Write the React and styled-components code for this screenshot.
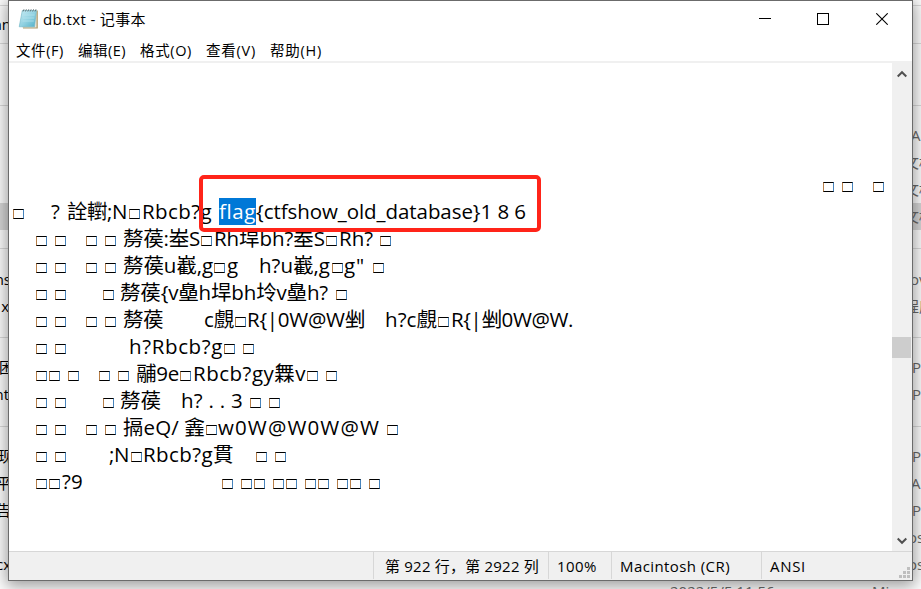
import React, { useLayoutEffect, useRef, useState } from "react";
import styled, { createGlobalStyle, css } from "styled-components";

const Global = createGlobalStyle`
  * { box-sizing: border-box; }
  html, body { margin: 0; overflow: hidden; background: #fff; }
`;

const FONT = '"Open Sans", "Noto Sans CJK SC", sans-serif';

/* ---------- text set to an exact measure ---------- */

const FitBox = styled.span`
  flex: none;
  width: ${(p) => p.$w}px;
  margin-left: ${(p) => p.$gap || 0}px;
  white-space: pre;
  ${(p) =>
    p.$selected &&
    css`
      color: #fff;
      background: #0078d7;
    `}
`;

function Fit({ w, gap, selected, children }) {
  const ref = useRef(null);
  const [spacing, setSpacing] = useState(0);
  useLayoutEffect(() => {
    const natural = ref.current.getBoundingClientRect().width;
    setSpacing((w - natural) / [...children].length);
  }, [w, children]);
  return (
    <FitBox $w={w} $gap={gap} $selected={selected}>
      <span ref={ref} style={{ letterSpacing: `${spacing}px` }}>
        {children}
      </span>
    </FitBox>
  );
}

/* ---------- file list behind the window ---------- */

const Desktop = styled.div`
  position: relative;
  width: 921px;
  height: 589px;
  overflow: hidden;
  background: #fff;
  font-family: ${FONT};
  color: #000;
`;

const FileRow = styled.div`
  display: flex;
  align-items: center;
  justify-content: space-between;
  height: ${(p) => p.$h}px;
  padding-bottom: 2px;
  background: ${(p) => (p.$hot ? "#d9d9d9" : "transparent")};
  border-bottom: ${(p) => (p.$line ? "1px solid #dcdcdc" : "0")};
  font-size: 15px;
  line-height: 20px;
  white-space: pre;
`;

const NameCell = styled.span`
  display: flex;
  justify-content: flex-end;
  width: ${(p) => p.$w || 9}px;
`;

const TypeCell = styled.span`
  width: ${(p) => p.$w}px;
  color: #6a6a6a;
`;

const DateCell = styled.span`
  flex: 1;
  padding-left: 661px;
  color: #6a6a6a;
`;

const FILE_ROWS = [
  { h: 6, line: true },
  { h: 38, line: true, name: "an", nameWidth: 11 },
  { h: 62, line: true },
  { h: 16 },
  { h: 27, type: "A", w: 10 },
  { h: 27, type: "文档", w: 17 },
  { h: 27, type: "文档", w: 17 },
  { h: 27, type: "文档", w: 17, hot: true },
  { h: 19, line: true },
  { h: 17 },
  { h: 27, name: "ns", nameWidth: 11, type: "ov", w: 11 },
  { h: 27, name: "x", type: "程序", w: 17 },
  { h: 18, line: true },
  { h: 16 },
  { h: 27, name: "困", nameWidth: 14, type: "P", w: 9 },
  { h: 27, name: "nt", type: "P", w: 9 },
  { h: 19, line: true },
  { h: 16 },
  { h: 27, name: "现", nameWidth: 13, type: "P", w: 9 },
  { h: 27, name: "平", nameWidth: 11, type: "A", w: 10 },
  { h: 27, name: "告", nameWidth: 11, type: "P", w: 9 },
  { h: 27, type: "os", w: 13 },
  { h: 27, name: "cx", nameWidth: 11, type: "os", w: 13 },
  { h: 27, date: "2022/5/5 11:56", type: "Micr", w: 49 },
];

/* ---------- Notepad window ---------- */

const Window = styled.main`
  position: absolute;
  left: 8px;
  top: 0;
  width: 905px;
  height: 581px;
  display: flex;
  flex-direction: column;
  border: 1px solid #6b6b6b;
  background: #fff;
  box-shadow: 0 3px 15px 2px rgba(0, 0, 0, 0.4);
`;

const TitleBar = styled.header`
  display: flex;
  align-items: center;
  height: 36px;
  padding-left: 9px;
  font-size: 15px;
  line-height: 20px;

  > svg {
    flex: none;
  }
`;

const Caption = styled.div`
  display: flex;
  flex: 1;
`;

const Controls = styled.div`
  display: flex;
  align-items: center;
  gap: 46px;
  padding-right: 24px;
`;

const CloseMark = styled.svg`
  margin-left: 1px;
`;

const MenuBar = styled.nav`
  display: flex;
  height: 26px;
  padding-left: 7px;
  border-bottom: 2px solid #f0f0f0;
  font-size: 14.5px;
  line-height: 28px;
`;

const Editor = styled.section`
  display: flex;
  height: 488px;
`;

const Page = styled.div`
  flex: 1;
  padding-top: 107px;
  overflow: hidden;
`;

const Line = styled.div`
  display: flex;
  align-items: baseline;
  height: 27px;
  font-size: 20.5px;
  line-height: 27px;

  &::before {
    content: "\\200b";
    width: 0;
    font-family: "Noto Sans CJK SC", sans-serif;
  }
`;

const Missing = styled.span`
  flex: none;
  width: 11px;
  height: 10px;
  margin-left: ${(p) => p.$gap}px;
  border: 1px solid #000;
  border-left-color: #b87f48;
  border-right-color: #4784bd;
`;

const ScrollTrack = styled.div`
  display: flex;
  flex-direction: column;
  align-items: center;
  width: 20px;
  padding: 7px 1px 6px 0;
  background: #f0f0f0;
`;

const Thumb = styled.div`
  width: 19px;
  height: 21px;
  margin: 259px 0 auto;
  background: #cdcdcd;
`;

const StatusBar = styled.footer`
  display: flex;
  height: 29px;
  border-top: 1px solid #d7d7d7;
  background: #f0f0f0;
  font-size: 15px;
  line-height: 29px;
`;

const StatusCell = styled.div`
  display: flex;
  width: ${(p) => p.$w}px;
  height: 27px;
  border-left: ${(p) => (p.$plain ? "0" : "1px solid #d7d7d7")};
`;

const Grip = styled.svg`
  align-self: flex-end;
  margin: 0 2px 1px auto;
`;

const Highlight = styled.div`
  position: absolute;
  left: 199px;
  top: 175px;
  width: 342px;
  height: 57px;
  border: 4px solid #ff2419;
  border-radius: 5px;
`;

const MENUS = [
  ["文件(F)", 0, 48],
  ["编辑(E)", 14, 48],
  ["格式(O)", 14, 52],
  ["查看(V)", 14, 50],
  ["帮助(H)", 14, 52],
];

/* Each entry is [start, end, text]; a bare number is an undefined glyph. */
const LINES = [
  [823, 842, 873],
  [
    13,
    [51, 60, "?"],
    [67, 127, "詮轛;N"],
    129,
    [142, 212, "Rbcb?g"],
    [219, 256, "flag", true],
    [256, 526, "{ctfshow_old_database}1 8 6"],
  ],
  [36, 55, 86, 105, [123, 200, "剺葔:峚S"], 201, [214, 325, "Rh垾bh?峚S"], 326, [339, 373, "Rh?"], 380],
  [36, 55, 86, 105, [123, 213, "剺葔u嶻,g"], 214, [227, 239, "g"], [259, 330, "h?u嶻,g"], 332, [344, 365, 'g"'], 373],
  [36, 55, 103, [120, 328, "剺葔{v皨h垾bh坽v皨h?"], 336],
  [
    36,
    55,
    86,
    105,
    [123, 163, "剺葔"],
    [204, 234, "c覻"],
    235,
    [247, 365, "R{|0W@W剉"],
    [385, 437, "h?c覻"],
    438,
    [451, 573, "R{|剉0W@W."],
  ],
  [36, 55, [129, 223, "h?Rbcb?g"], 224, 243],
  [36, 49, 68, 99, 118, [136, 179, "鬴9e"], 180, [193, 306, "Rbcb?gy橆v"], 307, 326],
  [36, 55, 103, [120, 161, "剺葔"], [181, 243, "h? . . 3"], 250, 269],
  [36, 55, 86, 105, [123, 205, "搹eQ/ 錱"], 206, [218, 380, "w0W@W0W@W"], 387],
  [36, 55, [109, 129, ";N"], 131, [143, 234, "Rbcb?g貫"], 256, 275],
  [36, 49, [62, 83, "?9"], 222, 241, 254, 273, 286, 305, 318, 337, 350, 369],
];

function TextLine({ items }) {
  let x = 9;
  return (
    <Line>
      {items.map((item, i) => {
        const box = typeof item === "number";
        const start = box ? item : item[0];
        const gap = start - x;
        x = box ? item + 11 : item[1];
        return box ? (
          <Missing key={i} $gap={gap} />
        ) : (
          <Fit key={i} gap={gap} w={item[1] - item[0]} selected={item[3]}>
            {item[2]}
          </Fit>
        );
      })}
    </Line>
  );
}

function NotepadIcon() {
  return (
    <svg width="22" height="22" viewBox="0 0 22 22">
      <defs>
        <linearGradient id="pad" x1="0" y1="0" x2="1" y2="1">
          <stop offset="0" stopColor="#c9edf5" />
          <stop offset="0.55" stopColor="#8fd0e0" />
          <stop offset="1" stopColor="#4faec6" />
        </linearGradient>
      </defs>
      <path d="M5 2.5H19.8V20.5H5Z" fill="#b09a6a" />
      <path d="M4 2H18.5V19.5H4Z" fill="#e9e7dc" />
      <path d="M4.3 2.5H18.5L16.5 18.8H1.2Z" fill="url(#pad)" stroke="#6bb3c5" strokeWidth=".6" />
      <path d="M5.4 7H16.6M5 10H16.2M4.5 13H15.8" stroke="#b9e4ee" strokeWidth=".7" />
      <path d="M5 3.5 6 1.3M7.4 3.5 8.4 1.3M9.8 3.5l1-2.2M12.2 3.5l1-2.2M14.6 3.5l1-2.2M17 3.5l1-2.2" stroke="#66777d" strokeWidth="1" />
    </svg>
  );
}

export default function App() {
  return (
    <Desktop>
      <Global />
      {FILE_ROWS.map((r, i) => (
        <FileRow key={i} $h={r.h} $line={r.line} $hot={r.hot}>
          <NameCell $w={r.nameWidth}>{r.name}</NameCell>
          {r.date && <DateCell>{r.date}</DateCell>}
          {r.type && <TypeCell $w={r.w}>{r.type}</TypeCell>}
        </FileRow>
      ))}
      <Window>
        <TitleBar>
          <NotepadIcon />
          <Caption>
            <Fit gap={3} w={103}>
              db.txt - 记事本
            </Fit>
          </Caption>
          <Controls>
            <svg width="12" height="12" shapeRendering="crispEdges">
              <path d="M0 5.5H12" stroke="#000" />
            </svg>
            <svg width="12" height="12" shapeRendering="crispEdges">
              <rect x=".5" y=".5" width="11" height="11" fill="none" stroke="#000" />
            </svg>
            <CloseMark width="12" height="12">
              <path d="M.3.3 11.7 11.7M11.7.3.3 11.7" stroke="#000" strokeWidth="1.1" />
            </CloseMark>
          </Controls>
        </TitleBar>
        <MenuBar>
          {MENUS.map(([label, gap, w]) => (
            <Fit key={label} gap={gap} w={w}>
              {label}
            </Fit>
          ))}
        </MenuBar>
        <Editor>
          <Page>
            {LINES.map((items, i) => (
              <TextLine key={i} items={items} />
            ))}
          </Page>
          <ScrollTrack>
            <svg width="10" height="8">
              <path d="M.7 6.5 5 2.2 9.3 6.5" fill="none" stroke="#505050" strokeWidth="2" />
            </svg>
            <Thumb />
            <svg width="10" height="8">
              <path d="M.7 1.5 5 5.8 9.3 1.5" fill="none" stroke="#505050" strokeWidth="2" />
            </svg>
          </ScrollTrack>
        </Editor>
        <StatusBar>
          <StatusCell $w={364} $plain />
          <StatusCell $w={175}>
            <Fit gap={11} w={154}>
              第 922 行，第 2922 列
            </Fit>
          </StatusCell>
          <StatusCell $w={63}>
            <Fit gap={8} w={40}>
              100%
            </Fit>
          </StatusCell>
          <StatusCell $w={150}>
            <Fit gap={8} w={110}>
              Macintosh (CR)
            </Fit>
          </StatusCell>
          <StatusCell $w={151}>
            <Fit gap={8} w={36}>
              ANSI
            </Fit>
            <Grip width="11" height="11" fill="#bfbfbf" shapeRendering="crispEdges">
              <path d="M8 0h3v3h-3zM4 4h3v3h-3zM8 4h3v3h-3zM0 8h3v3h-3zM4 8h3v3h-3zM8 8h3v3h-3z" />
            </Grip>
          </StatusCell>
        </StatusBar>
      </Window>
      <Highlight />
    </Desktop>
  );
}
